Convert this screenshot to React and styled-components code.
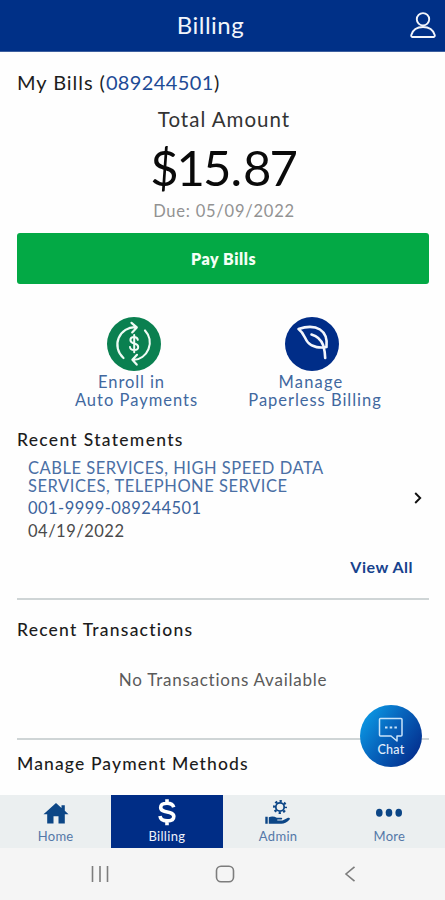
import styled, { createGlobalStyle } from "styled-components";

const GlobalStyle = createGlobalStyle`
  * {
    box-sizing: border-box;
  }
  body {
    margin: 0;
    background-color: #fefefe;
    font-family: Lato, "Open Sans", sans-serif;
  }
`;

const Screen = styled.div`
  width: 445px;
  height: 900px;
  display: flex;
  flex-direction: column;
  position: relative;
  overflow: hidden;
`;

const Header = styled.header`
  height: 52px;
  padding: 0 9px 1px 25px;
  display: grid;
  grid-template-columns: 8px 1fr 26px;
  align-items: center;
  background-color: #003087;
  border-bottom: 1px solid #3d5f9f;
  color: #f2f5fb;
`;
const PageTitle = styled.h1`
  grid-column: 2;
  margin: 0;
  padding-right: 22px;
  font-size: 24px;
  font-weight: 400;
  line-height: 50px;
  letter-spacing: 0.5px;
  text-align: center;
`;

const Content = styled.main`
  flex: 1;
  min-height: 0;
  padding: 18px 16px 0 17px;
  display: flex;
  flex-direction: column;
  overflow: hidden;
`;

const Account = styled.h2`
  margin: 0;
  font-size: 20px;
  font-weight: 400;
  line-height: 25px;
  letter-spacing: 0.95px;
  color: #1d1d1d;
  white-space: nowrap;
`;
const AccountNumber = styled.span`
  letter-spacing: 0.4px;
  color: #1d4b96;
`;

const Summary = styled.section`
  display: flex;
  flex-direction: column;
  align-items: center;
  margin-top: 12px;
`;
const SummaryLabel = styled.div`
  padding-left: 2px;
  font-size: 20.5px;
  line-height: 24px;
  letter-spacing: 1px;
  color: #333;
`;
const Amount = styled.div`
  margin-top: 11px;
  font-size: 49px;
  line-height: 50px;
  letter-spacing: -2px;
  color: #0a0a0a;
`;
const Point = styled.span`
  margin: 0 3px 0 1px;
`;
const DueDate = styled.div`
  margin-top: 9px;
  padding-left: 2px;
  font-size: 16.5px;
  line-height: 20px;
  letter-spacing: 0.77px;
  color: #929292;
`;

const PayButton = styled.button`
  flex: none;
  height: 51px;
  margin-top: 12px;
  padding: 0 0 0 1px;
  border: none;
  border-radius: 3px;
  background-color: #03a945;
  color: #f4fff6;
  font-family: inherit;
  font-size: 16px;
  font-weight: 800;
  letter-spacing: 0.56px;
`;

const Actions = styled.section`
  display: flex;
  justify-content: center;
  margin: 33px 0 20px;
  padding-left: 2px;
`;
const Action = styled.a`
  width: ${(props) => props.$width}px;
  display: flex;
  flex-direction: column;
  align-items: center;
`;
const ActionIcon = styled.span`
  width: 54px;
  height: 54px;
  margin-bottom: 2px;
  border-radius: 50%;
  display: flex;
  align-items: center;
  justify-content: center;
  background-color: ${(props) => props.$color};
`;
const ActionLabel = styled.span`
  font-size: 16.5px;
  line-height: 18px;
  letter-spacing: ${(props) => props.$spacing}px;
  color: #41689f;
  white-space: nowrap;
  transform: translateX(${(props) => props.$shift || 0}px);
`;

const SectionTitle = styled.h3`
  margin: 0;
  font-size: 17.5px;
  font-weight: 500;
  line-height: 21px;
  letter-spacing: ${(props) => props.$spacing}px;
  color: #1c1c1c;
`;

const Statement = styled.div`
  display: flex;
  align-items: center;
  justify-content: space-between;
  padding: 9px 7px 0 11px;
`;
const StatementText = styled.div`
  display: flex;
  flex-direction: column;
`;
const Services = styled.div`
  font-size: 16.5px;
  line-height: 18px;
  letter-spacing: 0.52px;
  color: #4a6fa5;
  white-space: nowrap;
`;
const StatementNumber = styled.div`
  margin-top: 2px;
  font-size: 16.5px;
  line-height: 22px;
  letter-spacing: 0.45px;
  color: #3c639c;
`;
const StatementDate = styled.div`
  margin-top: 1px;
  font-size: 16.5px;
  line-height: 22px;
  letter-spacing: 0.5px;
  color: #4a4a4a;
`;
const Chevron = styled.svg`
  width: 8px;
  height: 12px;
  margin-bottom: 5px;
`;
const ViewAll = styled.a`
  align-self: flex-end;
  margin: 15px 16px 0 0;
  font-size: 16px;
  font-weight: 700;
  line-height: 20px;
  letter-spacing: 0.52px;
  color: #17428d;
`;

const Divider = styled.hr`
  flex: none;
  width: 100%;
  height: 2px;
  margin: ${(props) => props.$top}px 0 ${(props) => props.$bottom}px;
  border: none;
  background-color: #cfd5d6;
`;
const Empty = styled.p`
  margin: 29px 0 0;
  font-size: 17px;
  line-height: 21px;
  letter-spacing: 0.75px;
  text-align: center;
  color: #5a5a5a;
`;

const ChatButton = styled.button`
  position: absolute;
  left: 360px;
  top: 705px;
  width: 62px;
  height: 62px;
  padding: 11px 0 0;
  border: none;
  border-radius: 50%;
  display: flex;
  flex-direction: column;
  align-items: center;
  background: linear-gradient(125deg, #0b9be6 8%, #0765bd 45%, #04308f 88%);
  color: #e3effc;
  font-family: inherit;
  font-size: 12.5px;
  font-weight: 500;
  line-height: 14px;
  letter-spacing: 0.3px;
`;

const TabBar = styled.nav`
  height: 53px;
  display: grid;
  grid-template-columns: repeat(4, 1fr);
  background-color: #ebeff0;
`;
const Tab = styled.a`
  display: flex;
  flex-direction: column;
  align-items: center;
  padding-top: 3px;
  background-color: ${(props) => (props.$active ? "#002d86" : "transparent")};
  color: ${(props) => (props.$active ? "#fff" : "#0c4686")};
`;
const TabLabel = styled.span`
  margin-top: 1px;
  font-size: 13px;
  line-height: 18px;
  letter-spacing: 0.3px;
  color: ${(props) => (props.$active ? "#eef2fb" : "#5478a8")};
`;

const SystemBar = styled.footer`
  height: 52px;
  display: grid;
  grid-template-columns: repeat(3, 125px);
  align-items: center;
  justify-items: center;
  padding-left: 37px;
  background-color: #f5f5f5;
  color: #7d7d7d;
`;

const UserIcon = () => (
  <svg width="26" height="27" viewBox="0 0 26 27" fill="none" stroke="currentColor" strokeWidth="1.9">
    <circle cx="13" cy="7.3" r="6.2" />
    <path d="M2.4 25c-1-.2-1.4-.9-1.1-2 1.6-5.5 6-8 11.7-8s10.100 2.500 11.700 8c.3 1.100-.1 1.800-1.100 2z" strokeLinejoin="round" />
  </svg>
);

const AutoPayIcon = () => (
  <svg width="54" height="54" viewBox="0 0 54 54" fill="none" stroke="#f0fbf5" strokeWidth="2.2" strokeLinecap="round" strokeLinejoin="round">
    <path d="M16.500 41A17.500 17.500 0 0 1 29 10.200M24.500 5.800l5.300 4.600-4.600 5" />
    <path d="M38 13.500A17.500 17.500 0 0 1 26 43M30 37.800l-4.600 5 4.300 4.800" />
    <path d="M30.800 22.800c-.3-1.900-1.800-2.700-3.700-2.700-2.200 0-3.700 1-3.700 2.900 0 4.600 7.800 2.500 7.800 7 0 2-1.700 3-4 3-2.500 0-4-1-4.200-3M27.200 18v17.200" strokeWidth="2" />
  </svg>
);

const LeafIcon = () => (
  <svg width="54" height="54" viewBox="0 0 54 54" fill="none" stroke="#f3f6fc" strokeWidth="2.6" strokeLinecap="round" strokeLinejoin="round">
    <path d="M13.500 12C20 9.800 29 8.700 35 12.500c5.500 3.500 7.500 9 6.500 17.500-6 1.300-14 .5-18.500-4.500-3.500-4-3.500-9-9.500-13.500z" />
    <path d="M26.500 17.500c5.500 1.500 10 6 11.800 11 1.100 4 1.800 8 1.900 12.500" />
  </svg>
);

const ChevronIcon = () => (
  <Chevron viewBox="0 0 8 12" fill="none" stroke="#111" strokeWidth="1.900">
    <path d="M1.200 1l5 5-5 5" />
  </Chevron>
);

const ChatIcon = () => (
  <svg width="28" height="27" viewBox="0 0 28 27" fill="none" stroke="#c9e4fa" strokeWidth="1.500" strokeLinejoin="round">
    <path d="M3.500 2.500h20.500q1 0 1 1v15.500q0 1-1 1h-4v5l-6-5H3.500q-1 0-1-1v-15.500q0-1 1-1z" />
    <path d="M8 11.500h2.500M12.700 11.500h2.500M17.400 11.500h2.500" strokeWidth="2.200" />
  </svg>
);

const HomeIcon = () => (
  <svg width="28" height="28" viewBox="0 0 28 28" fill="currentColor">
    <path d="M14 5L1.500 16.200h3.700V25.500h6.300v-7.200h5v7.200h6.300v-9.300h3.700l-3.700-3.400V7.200h-3.300v2.700z" />
  </svg>
);

const DollarIcon = () => (
  <svg width="28" height="28" viewBox="0 0 28 28" fill="none" stroke="currentColor" strokeWidth="3.600">
    <path d="M20.700 9.300C20 6.500 17.500 5.300 14 5.300c-3.800 0-6.300 1.600-6.300 4.200 0 6.500 13.100 2.500 13.100 9 0 2.800-2.600 4.400-6.600 4.400-4.200 0-6.800-1.700-7.200-4.900M14 1.300v4M14 23v4.200" />
  </svg>
);

const AdminIcon = () => (
  <svg width="28" height="28" viewBox="0 0 28 28" fill="currentColor">
    <g fill="none" stroke="currentColor">
      <circle cx="16" cy="9" r="4.200" strokeWidth="1.800" />
      <circle cx="16" cy="9" r="5.900" strokeWidth="2.200" strokeDasharray="2.300 2.334" strokeDashoffset="1.150" />
    </g>
    <path d="M1.300 18.800h2.400v7H1.300zM4.800 19.200c3-1 5.500-.8 8 .6h4.500c1.200 0 1.200 1.700 0 1.800h-4v.8h5.200l5.500-2.600c1.600-.6 2.600.7 1.400 1.900-2.500 2.400-5.200 4.100-8 4.100H4.800z" />
  </svg>
);

const MoreIcon = () => (
  <svg width="28" height="28" viewBox="0 0 28 28" fill="currentColor">
    <ellipse cx="4.300" cy="14.800" rx="3.300" ry="4" />
    <ellipse cx="14" cy="14.800" rx="3.300" ry="4" />
    <ellipse cx="23.700" cy="14.800" rx="3.300" ry="4" />
  </svg>
);

const tabs = [
  { label: "Home", Icon: HomeIcon },
  { label: "Billing", Icon: DollarIcon, active: true },
  { label: "Admin", Icon: AdminIcon },
  { label: "More", Icon: MoreIcon },
];

const App = () => {
  return (
    <Screen>
      <GlobalStyle />
      <Header>
        <PageTitle>Billing</PageTitle>
        <UserIcon />
      </Header>
      <Content>
        <Account>
          My Bills (<AccountNumber>089244501</AccountNumber>)
        </Account>
        <Summary>
          <SummaryLabel>Total Amount</SummaryLabel>
          <Amount>
            $15<Point>.</Point>87
          </Amount>
          <DueDate>Due: 05/09/2022</DueDate>
        </Summary>
        <PayButton>Pay Bills</PayButton>
        <Actions>
          <Action $width={176}>
            <ActionIcon $color="#0a8050">
              <AutoPayIcon />
            </ActionIcon>
            <ActionLabel $spacing={0.9} $shift={-2}>
              Enroll in
            </ActionLabel>
            <ActionLabel $spacing={1} $shift={3}>
              Auto Payments
            </ActionLabel>
          </Action>
          <Action $width={181}>
            <ActionIcon $color="#002d88">
              <LeafIcon />
            </ActionIcon>
            <ActionLabel $spacing={1.2} $shift={-1}>
              Manage
            </ActionLabel>
            <ActionLabel $spacing={0.97} $shift={3}>
              Paperless Billing
            </ActionLabel>
          </Action>
        </Actions>
        <SectionTitle $spacing={1.3}>Recent Statements</SectionTitle>
        <Statement>
          <StatementText>
            <Services>
              CABLE SERVICES, HIGH SPEED DATA
              <br />
              SERVICES, TELEPHONE SERVICE
            </Services>
            <StatementNumber>001-9999-089244501</StatementNumber>
            <StatementDate>04/19/2022</StatementDate>
          </StatementText>
          <ChevronIcon />
        </Statement>
        <ViewAll>View All</ViewAll>
        <Divider $top={21} $bottom={19} />
        <SectionTitle $spacing={1.22}>Recent Transactions</SectionTitle>
        <Empty>No Transactions Available</Empty>
        <Divider $top={48} $bottom={13} />
        <SectionTitle $spacing={1.13}>Manage Payment Methods</SectionTitle>
      </Content>
      <TabBar>
        {tabs.map(({ label, Icon, active }) => (
          <Tab key={label} $active={active}>
            <Icon />
            <TabLabel $active={active}>{label}</TabLabel>
          </Tab>
        ))}
      </TabBar>
      <SystemBar>
        <svg width="18" height="18" viewBox="0 0 18 18" stroke="currentColor" strokeWidth="1.600">
          <path d="M1.500 1v16M9 1v16M16.500 1v16" />
        </svg>
        <svg width="20" height="18" viewBox="0 0 20 18" fill="none" stroke="currentColor" strokeWidth="1.600">
          <rect x="1.500" y="1.200" width="17" height="15.600" rx="4.500" />
        </svg>
        <svg width="12" height="18" viewBox="0 0 12 18" fill="none" stroke="currentColor" strokeWidth="1.600">
          <path d="M10.500 1.800L2 9l8.500 7.200" />
        </svg>
      </SystemBar>
      <ChatButton>
        <ChatIcon />
        Chat
      </ChatButton>
    </Screen>
  );
};

export default App;
